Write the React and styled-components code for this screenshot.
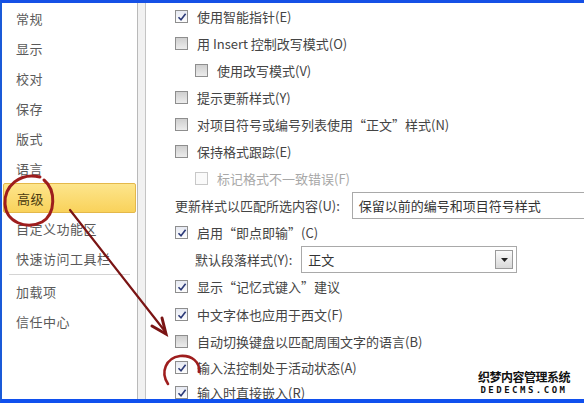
import React from "react";
import styled, { createGlobalStyle, css } from "styled-components";

const Global = createGlobalStyle`
  html, body { margin: 0; padding: 0; background: #fff; }
  body { font-family: "Noto Sans CJK SC", "Noto Sans", sans-serif; }
  * { box-sizing: border-box; }
`;

const Frame = styled.div`
  position: relative;
  width: 584px;
  height: 403px;
  border-top: 3px solid #1550e6;
  border-left: 2px solid #1a5ad8;
  border-bottom: 4px solid #1050ee;
  display: flex;
  overflow: hidden;
  background: #fff;
  color: #444;
  font-size: 13px;
`;

const Nav = styled.nav`
  width: 136px;
  flex: none;
  display: flex;
  flex-direction: column;
  padding: 0 1px;
  background: #fff;
  border-right: 1px solid #b9b9b9;
`;

const NavItem = styled.div`
  height: 30px;
  display: flex;
  align-items: center;
  padding-left: 13px;
  color: #5a5a5a;
  letter-spacing: 0.5px;
  ${(p) =>
    p.$active &&
    css`
      background: linear-gradient(#fde58c, #f9d25b);
      border: 1px solid #e4b84a;
      border-radius: 2px;
      color: #4a3a10;
    `}
`;

const NavSep = styled.div`
  height: 1px;
  margin: 1px 6px 1px 6px;
  background: #d4d4d4;
`;

const Gutter = styled.div`
  width: 8px;
  flex: none;
  background: #f1f1f1;
  border-right: 1px solid #c4c4c4;
`;

const Content = styled.div`
  flex: 1;
  display: flex;
  flex-direction: column;
  padding: 0 0 0 29px;
  overflow: hidden;
`;

const Row = styled.div`
  height: 27px;
  flex: none;
  display: flex;
  align-items: center;
  gap: 9px;
  padding-left: ${(p) => (p.$indent ? 20 : 0)}px;
  margin-top: ${(p) => p.$mt || 0}px;
  white-space: nowrap;
  color: ${(p) => (p.$disabled ? "#a8a8a8" : "#444")};
`;

const Box = styled.span`
  width: 13px;
  height: 13px;
  flex: none;
  border: 1px solid ${(p) => (p.$disabled ? "#c8c8c8" : "#8e8e8e")};
  background: ${(p) =>
    p.$disabled
      ? "#fafafa"
      : p.$checked
      ? "linear-gradient(#e6e9f2, #fdfdfd)"
      : "linear-gradient(#cfcfcf, #ececec)"};
  display: flex;
  align-items: center;
  justify-content: center;
`;

const FieldLabel = styled.span`
  padding-left: ${(p) => (p.$indent ? 20 : 0)}px;
`;

const Field = styled.div`
  height: 27px;
  margin-left: ${(p) => p.$ml}px;
  width: ${(p) => p.$w}px;
  flex: none;
  border: 1px solid #a9a9a9;
  display: flex;
  align-items: center;
  justify-content: space-between;
  padding: 0 3px 0 6px;
  background: #fff;
  color: #333;
`;

const DropBtn = styled.span`
  width: 18px;
  height: 19px;
  border: 1px solid #9a9a9a;
  background: linear-gradient(#fafafa, #d9d9d9);
  display: flex;
  align-items: center;
  justify-content: center;
`;

const FieldRow = styled(Row)`
  gap: 0;
`;

const Overlay = styled.svg`
  position: absolute;
  left: -2px;
  top: -3px;
  pointer-events: none;
`;

const Watermark = styled.div`
  position: absolute;
  right: 14px;
  bottom: 4px;
  display: flex;
  flex-direction: column;
  align-items: center;
  font-weight: bold;
  color: #111;
  text-shadow: 1px 0 #fff, -1px 0 #fff, 0 1px #fff, 0 -1px #fff;
  line-height: 1;
`;

const WmCn = styled.span`
  font-size: 12px;
  letter-spacing: -0.5px;
`;

const WmEn = styled.span`
  font-family: "DejaVu Sans Mono", monospace;
  font-size: 9px;
  letter-spacing: 2.5px;
  margin-top: 3px;
`;

const Check = () => (
  <svg width="10" height="10" viewBox="0 0 10 10">
    <path d="M1.5 5.2 L4 7.8 L8.6 1.8" fill="none" stroke="#2c3a78" strokeWidth="1.6" />
  </svg>
);

const Opt = ({ checked, disabled, indent, mt, children }) => (
  <Row $indent={indent} $disabled={disabled} $mt={mt}>
    <Box $checked={checked} $disabled={disabled}>
      {checked && <Check />}
    </Box>
    <span>{children}</span>
  </Row>
);

const navItems = ["常规", "显示", "校对", "保存", "版式", "语言", "高级", "自定义功能区", "快速访问工具栏"];

export default function App() {
  return (
    <>
      <Global />
      <Frame>
        <Nav>
          {navItems.map((t) => (
            <NavItem key={t} $active={t === "高级"}>
              {t}
            </NavItem>
          ))}
          <NavSep />
          <NavItem>加载项</NavItem>
          <NavItem>信任中心</NavItem>
        </Nav>
        <Gutter />
        <Content>
          <Opt checked>使用智能指针(E)</Opt>
          <Opt>用 Insert 控制改写模式(O)</Opt>
          <Opt indent>使用改写模式(V)</Opt>
          <Opt>提示更新样式(Y)</Opt>
          <Opt>对项目符号或编号列表使用“正文”样式(N)</Opt>
          <Opt>保持格式跟踪(E)</Opt>
          <Opt indent disabled>标记格式不一致错误(F)</Opt>
          <FieldRow>
            <FieldLabel>更新样式以匹配所选内容(U):</FieldLabel>
            <Field $w={240} $ml={12}>保留以前的编号和项目符号样式</Field>
          </FieldRow>
          <Opt checked>启用“即点即输”(C)</Opt>
          <FieldRow>
            <FieldLabel $indent>默认段落样式(Y):</FieldLabel>
            <Field $w={216} $ml={9}>
              正文
              <DropBtn>
                <svg width="7" height="4" viewBox="0 0 7 4">
                  <path d="M0 0 H7 L3.5 4 Z" fill="#222" />
                </svg>
              </DropBtn>
            </Field>
          </FieldRow>
          <Opt checked>显示“记忆式键入”建议</Opt>
          <Opt checked mt={1}>中文字体也应用于西文(F)</Opt>
          <Opt>自动切换键盘以匹配周围文字的语言(B)</Opt>
          <Opt checked mt={-1}>输入法控制处于活动状态(A)</Opt>
          <Opt checked mt={-2}>输入时直接嵌入(R)</Opt>
        </Content>
        <Overlay width="584" height="403" viewBox="0 0 584 403">
          <g fill="none" stroke="#9e1d1d" strokeLinecap="round">
            <path d="M40 177 C20 172 4 186 5 204 C6 222 26 230 42 222 C56 214 56 190 44 180" strokeWidth="3" />
            <path d="M70 210 L164 330" strokeWidth="2.2" stroke="#7a1414" />
            <path d="M152 326 L166 334 L162 318" strokeWidth="3" stroke="#7a1414" />
            <path d="M168 384 C160 372 166 358 180 356 C192 355 200 362 199 372" strokeWidth="2.6" />
          </g>
        </Overlay>
        <Watermark>
          <WmCn>织梦内容管理系统</WmCn>
          <WmEn>DEDECMS.COM</WmEn>
        </Watermark>
      </Frame>
    </>
  );
}
